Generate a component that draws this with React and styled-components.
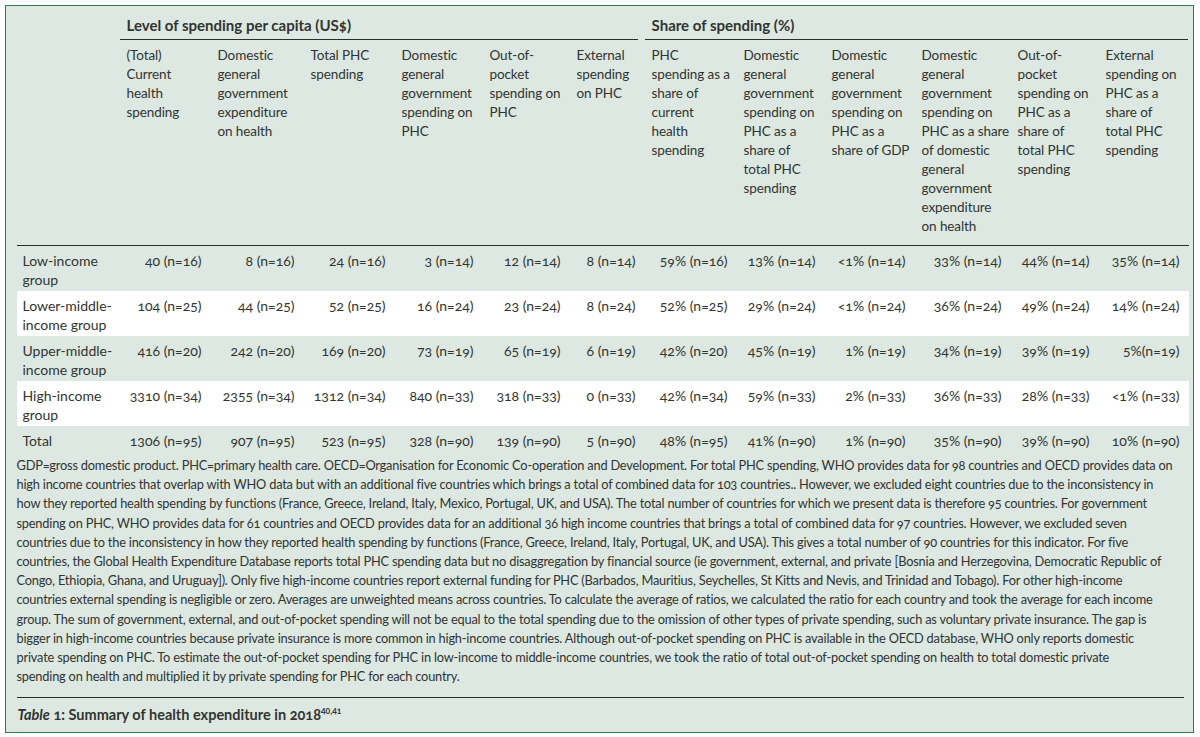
import React from "react";
import styled, { createGlobalStyle } from "styled-components";

const GlobalStyle = createGlobalStyle`
  html, body {
    margin: 0;
    padding: 0;
    background: #ffffff;
  }
  body {
    font-family: Lato, "Liberation Sans", sans-serif;
    color: #323432;
  }
`;

const colWidths = [103, 91, 93, 91, 88, 87, 75, 92, 88, 90, 96, 88, 90];

const headers = [
  ["(Total)", "Current", "health", "spending"],
  ["Domestic", "general", "government", "expenditure", "on health"],
  ["Total PHC", "spending"],
  ["Domestic", "general", "government", "spending on", "PHC"],
  ["Out-of-", "pocket", "spending on", "PHC"],
  ["External", "spending", "on PHC"],
  ["PHC", "spending as a", "share of", "current", "health", "spending"],
  ["Domestic", "general", "government", "spending on", "PHC as a", "share of", "total PHC", "spending"],
  ["Domestic", "general", "government", "spending on", "PHC as a", "share of GDP"],
  ["Domestic", "general", "government", "spending on", "PHC as a share", "of domestic", "general", "government", "expenditure", "on health"],
  ["Out-of-", "pocket", "spending on", "PHC as a", "share of", "total PHC", "spending"],
  ["External", "spending on", "PHC as a", "share of", "total PHC", "spending"],
];

const rows = [
  {
    label: ["Low-income", "group"],
    values: ["40 (n=16)", "8 (n=16)", "24 (n=16)", "3 (n=14)", "12 (n=14)", "8 (n=14)", "59% (n=16)", "13% (n=14)", "<1% (n=14)", "33% (n=14)", "44% (n=14)", "35% (n=14)"],
  },
  {
    label: ["Lower-middle-", "income group"],
    values: ["104 (n=25)", "44 (n=25)", "52 (n=25)", "16 (n=24)", "23 (n=24)", "8 (n=24)", "52% (n=25)", "29% (n=24)", "<1% (n=24)", "36% (n=24)", "49% (n=24)", "14% (n=24)"],
  },
  {
    label: ["Upper-middle-", "income group"],
    values: ["416 (n=20)", "242 (n=20)", "169 (n=20)", "73 (n=19)", "65 (n=19)", "6 (n=19)", "42% (n=20)", "45% (n=19)", "1% (n=19)", "34% (n=19)", "39% (n=19)", "5%(n=19)"],
  },
  {
    label: ["High-income", "group"],
    values: ["3310 (n=34)", "2355 (n=34)", "1312 (n=34)", "840 (n=33)", "318 (n=33)", "0 (n=33)", "42% (n=34)", "59% (n=33)", "2% (n=33)", "36% (n=33)", "28% (n=33)", "<1% (n=33)"],
  },
  {
    label: ["Total"],
    values: ["1306 (n=95)", "907 (n=95)", "523 (n=95)", "328 (n=90)", "139 (n=90)", "5 (n=90)", "48% (n=95)", "41% (n=90)", "1% (n=90)", "35% (n=90)", "39% (n=90)", "10% (n=90)"],
  },
];

const footnote = [
  "GDP=gross domestic product. PHC=primary health care. OECD=Organisation for Economic Co-operation and Development. For total PHC spending, WHO provides data for 98 countries and OECD provides data on",
  "high income countries that overlap with WHO data but with an additional five countries which brings a total of combined data for 103 countries.. However, we excluded eight countries due to the inconsistency in",
  "how they reported health spending by functions (France, Greece, Ireland, Italy, Mexico, Portugal, UK, and USA). The total number of countries for which we present data is therefore 95 countries. For government",
  "spending on PHC, WHO provides data for 61 countries and OECD provides data for an additional 36 high income countries that brings a total of combined data for 97 countries. However, we excluded seven",
  "countries due to the inconsistency in how they reported health spending by functions (France, Greece, Ireland, Italy, Portugal, UK, and USA). This gives a total number of 90 countries for this indicator. For five",
  "countries, the Global Health Expenditure Database reports total PHC spending data but no disaggregation by financial source (ie government, external, and private [Bosnia and Herzegovina, Democratic Republic of",
  "Congo, Ethiopia, Ghana, and Uruguay]). Only five high-income countries report external funding for PHC (Barbados, Mauritius, Seychelles, St Kitts and Nevis, and Trinidad and Tobago). For other high-income",
  "countries external spending is negligible or zero. Averages are unweighted means across countries. To calculate the average of ratios, we calculated the ratio for each country and took the average for each income",
  "group. The sum of government, external, and out-of-pocket spending will not be equal to the total spending due to the omission of other types of private spending, such as voluntary private insurance. The gap is",
  "bigger in high-income countries because private insurance is more common in high-income countries. Although out-of-pocket spending on PHC is available in the OECD database, WHO only reports domestic",
  "private spending on PHC. To estimate the out-of-pocket spending for PHC in low-income to middle-income countries, we took the ratio of total out-of-pocket spending on health to total domestic private",
  "spending on health and multiplied it by private spending for PHC for each country.",
];

const Frame = styled.section`
  box-sizing: border-box;
  margin: 5px 0 0 5px;
  width: 1189px;
  height: 728px;
  border: 1.5px solid #2f7b4f;
  background: #dce8e1;
  padding: 0 3px 0 10.5px;
  font-variant-numeric: oldstyle-nums;
  overflow: hidden;
`;

const Table = styled.table`
  width: 1172px;
  table-layout: fixed;
  border-collapse: collapse;
  font-size: 14px;
  line-height: 19px;
`;

const GroupHead = styled.th`
  padding: 10px 0 0 0;
  text-align: left;
  vertical-align: bottom;
  font-size: 15px;
  font-weight: 700;
`;

const GroupRule = styled.div`
  margin-right: ${(p) => p.$gap}px;
  padding: 0 0 4px 7px;
  border-bottom: 1.5px solid #2b2f2c;
  white-space: nowrap;
`;

const HeadRow = styled.tr`
  border-bottom: 1.5px solid #2b2f2c;
`;

const ColHead = styled.th`
  padding: 6px 0 9px 7px;
  text-align: left;
  vertical-align: top;
  font-size: 13.5px;
  font-weight: 400;
  letter-spacing: -0.1px;
  white-space: nowrap;
`;

const Line = styled.span`
  display: block;
`;

const DataRow = styled.tr`
  background: ${(p) => (p.$striped ? "#ffffff" : "transparent")};
`;

const LabelCell = styled.td`
  padding: 5px 0 ${(p) => (p.$single ? 3 : 2)}px 6px;
  vertical-align: top;
  white-space: nowrap;
`;

const ValueCell = styled.td`
  padding: 5px 9px ${(p) => (p.$single ? 3 : 2)}px 0;
  text-align: right;
  vertical-align: top;
  white-space: nowrap;
`;

const Notes = styled.p`
  margin: 0;
  padding: 3px 0 0 0;
  font-size: 12.8px;
  line-height: 19.2px;
  letter-spacing: -0.2px;
  white-space: nowrap;
`;

const Caption = styled.div`
  margin: 11px 6px 0 0;
  padding: 7px 0 0 1px;
  border-top: 1.5px solid #2b2f2c;
  font-size: 14.5px;
  line-height: 19px;
  font-weight: 700;
  em {
    font-style: italic;
  }
  sup {
    font-size: 8.5px;
    line-height: 0;
    vertical-align: 6px;
  }
`;

export default function App() {
  return (
    <>
      <GlobalStyle />
      <Frame>
        <Table>
          <colgroup>
            {colWidths.map((w, i) => (
              <col key={i} style={{ width: w }} />
            ))}
          </colgroup>
          <thead>
            <tr>
              <th />
              <GroupHead colSpan={6}>
                <GroupRule $gap={7}>Level of spending per capita (US$)</GroupRule>
              </GroupHead>
              <GroupHead colSpan={6}>
                <GroupRule $gap={1}>Share of spending (%)</GroupRule>
              </GroupHead>
            </tr>
            <HeadRow>
              <th />
              {headers.map((lines, i) => (
                <ColHead key={i}>
                  {lines.map((l, j) => (
                    <Line key={j}>{l}</Line>
                  ))}
                </ColHead>
              ))}
            </HeadRow>
          </thead>
          <tbody>
            {rows.map((row, i) => {
              const single = row.label.length === 1;
              return (
                <DataRow key={i} $striped={i % 2 === 1}>
                  <LabelCell $single={single}>
                    {row.label.map((l, j) => (
                      <Line key={j}>{l}</Line>
                    ))}
                  </LabelCell>
                  {row.values.map((v, j) => (
                    <ValueCell key={j} $single={single}>
                      {v}
                    </ValueCell>
                  ))}
                </DataRow>
              );
            })}
          </tbody>
        </Table>
        <Notes>
          {footnote.map((l, i) => (
            <Line key={i}>{l}</Line>
          ))}
        </Notes>
        <Caption>
          <em>Table</em> 1: Summary of health expenditure in 2018<sup>40,41</sup>
        </Caption>
      </Frame>
    </>
  );
}
